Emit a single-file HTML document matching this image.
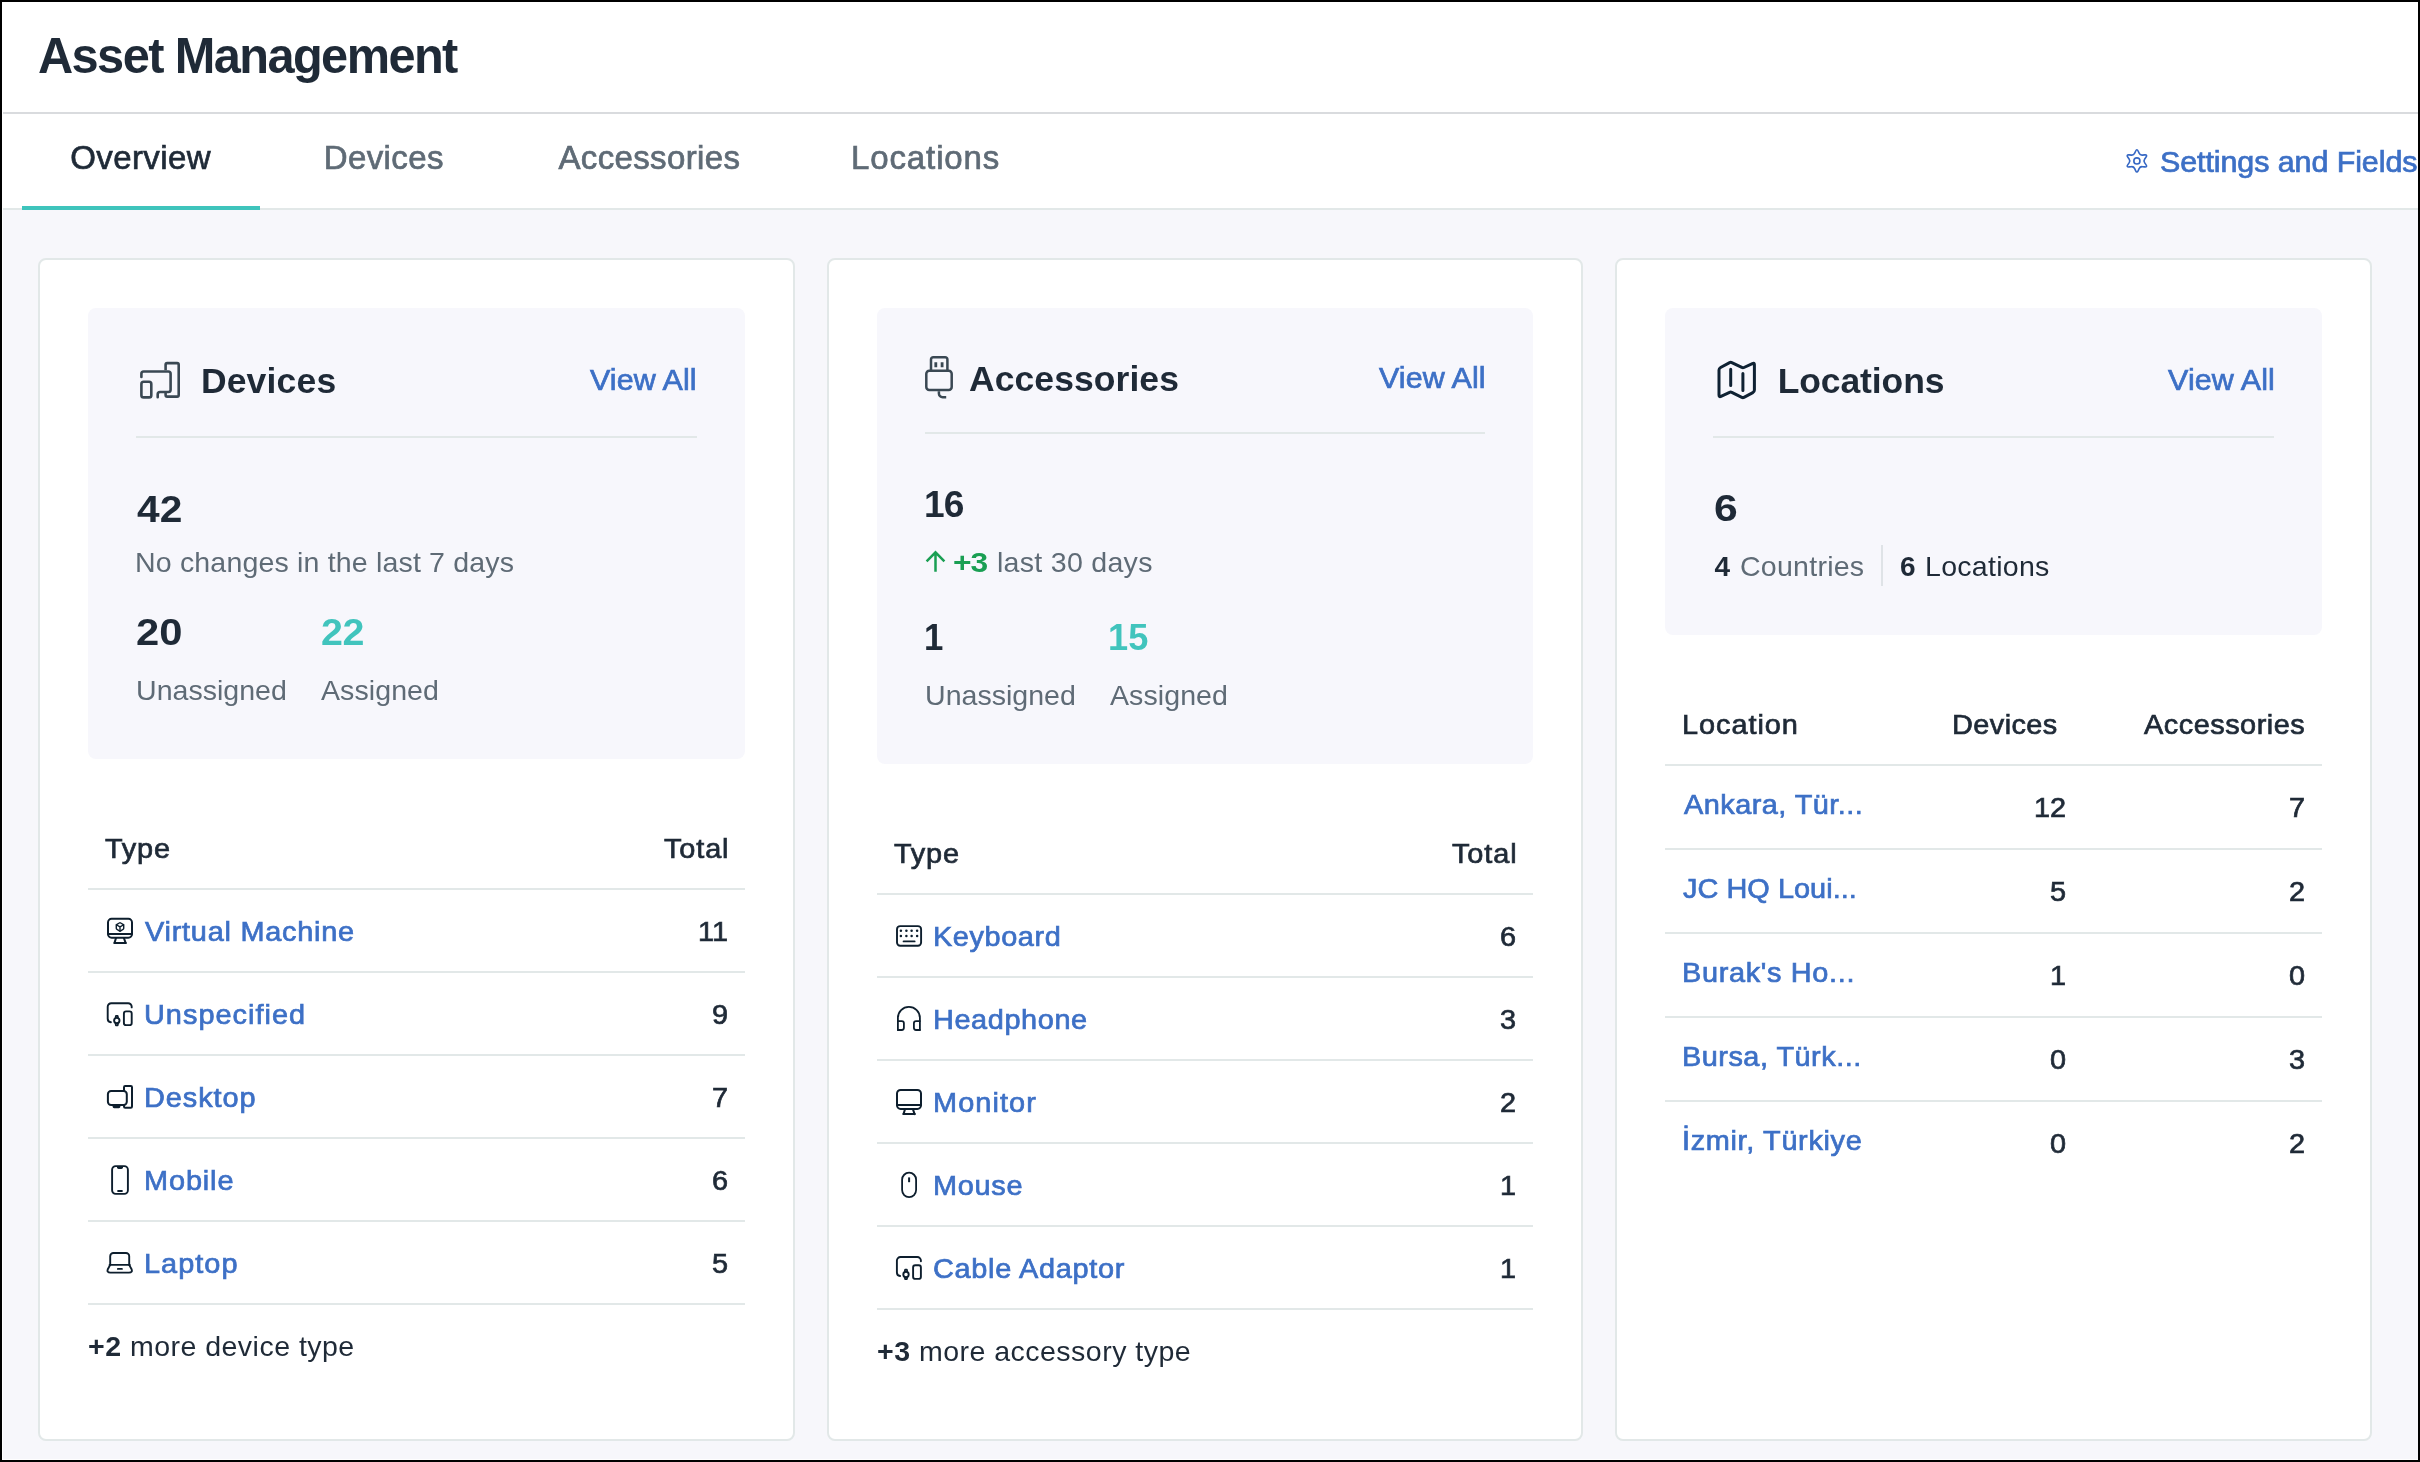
<!DOCTYPE html>
<html lang="en"><head><meta charset="utf-8"><title>Asset Management</title>
<style>
*{box-sizing:border-box;margin:0;padding:0}
html,body{width:2420px;height:1462px;overflow:hidden;background:#f7f7fb}
body{font-family:"Liberation Sans",sans-serif;position:relative}
.abs,.t,.card,.panel,.ln{position:absolute}
.t{white-space:pre;transform-origin:0 0}
.hdr{left:0;top:0;width:2420px;height:208px;background:#fff}
.card{background:#fff;border:2px solid #e2e8e8;border-radius:8px;top:258px;height:1183px}
.panel{background:#f7f7fc;border-radius:8px}
.ln{height:2px;background:#e2e8e8}
.frame{position:absolute;left:0;top:0;width:2420px;height:1462px;border:2px solid #000;z-index:10}
svg.ov{position:absolute;left:0;top:0;z-index:3}
.txt{position:absolute;left:0;top:0;width:2420px;height:1462px;z-index:4;will-change:transform}
.t{z-index:4}
</style></head>
<body>
<div class="abs hdr"></div>
<div class="ln" style="left:0;top:112px;width:2420px;background:#d9dbde"></div>
<div class="ln" style="left:0;top:208px;width:2420px;background:#e2e8e8"></div>
<div class="abs" style="left:22px;top:206px;width:238px;height:4px;background:#3ec4bc"></div>
<div class="abs" style="left:2px;top:2px;width:1px;height:1458px;background:#fff"></div>
<div class="abs" style="left:2px;top:1459px;width:2416px;height:1px;background:#fff"></div>
<div class="card" style="left:38px;width:757px"></div>
<div class="card" style="left:827px;width:756px"></div>
<div class="card" style="left:1615px;width:757px"></div>
<div class="panel" style="left:88px;top:308px;width:657px;height:451px"></div>
<div class="panel" style="left:877px;top:308px;width:656px;height:456px"></div>
<div class="panel" style="left:1665px;top:308px;width:657px;height:327px"></div>
<div class="ln" style="left:136px;top:436px;width:561px"></div>
<div class="ln" style="left:925px;top:432px;width:560px"></div>
<div class="ln" style="left:1713px;top:436px;width:561px"></div>
<div class="abs" style="left:1881px;top:545px;width:2px;height:41px;background:#dfe3e7"></div>
<div class="ln" style="left:88px;top:888px;width:657px"></div>
<div class="ln" style="left:877px;top:893px;width:656px"></div>
<div class="ln" style="left:88px;top:971px;width:657px"></div>
<div class="ln" style="left:877px;top:976px;width:656px"></div>
<div class="ln" style="left:88px;top:1054px;width:657px"></div>
<div class="ln" style="left:877px;top:1059px;width:656px"></div>
<div class="ln" style="left:88px;top:1137px;width:657px"></div>
<div class="ln" style="left:877px;top:1142px;width:656px"></div>
<div class="ln" style="left:88px;top:1220px;width:657px"></div>
<div class="ln" style="left:877px;top:1225px;width:656px"></div>
<div class="ln" style="left:88px;top:1303px;width:657px"></div>
<div class="ln" style="left:877px;top:1308px;width:656px"></div>
<div class="ln" style="left:1665px;top:764px;width:657px"></div>
<div class="ln" style="left:1665px;top:848px;width:657px"></div>
<div class="ln" style="left:1665px;top:932px;width:657px"></div>
<div class="ln" style="left:1665px;top:1016px;width:657px"></div>
<div class="ln" style="left:1665px;top:1100px;width:657px"></div>
<svg class="ov" width="2420" height="1462" viewBox="0 0 2420 1462"><g fill="none" stroke="#3567c4" stroke-width="1.6" stroke-linejoin="round"><path d="M2135.58 151.21Q2136.90 148.30 2138.22 151.21L2139.11 153.17Q2140.10 155.36 2142.49 155.12L2144.63 154.91Q2147.81 154.60 2145.95 157.20L2144.70 158.95Q2143.30 160.90 2144.70 162.85L2145.95 164.60Q2147.81 167.20 2144.63 166.89L2142.49 166.68Q2140.10 166.44 2139.11 168.63L2138.22 170.59Q2136.90 173.50 2135.58 170.59L2134.69 168.63Q2133.70 166.44 2131.31 166.68L2129.17 166.89Q2125.99 167.20 2127.85 164.60L2129.10 162.85Q2130.50 160.90 2129.10 158.95L2127.85 157.20Q2125.99 154.60 2129.17 154.91L2131.31 155.12Q2133.70 155.36 2134.69 153.17Z"/><circle cx="2136.9" cy="160.9" r="3.05"/></g><g fill="none" stroke="#3a4853" stroke-width="2.6" stroke-linecap="round" stroke-linejoin="round"><rect x="165.60" y="363.10" width="13.10" height="33.50" rx="1.6" /><rect x="140" y="370.2" width="30.6" height="21.8" fill="#f7f7fc" stroke="none"/><path d="M141.4 377V373.8a2.3 2.3 0 0 1 2.3-2.3H168.3a2.3 2.3 0 0 1 2.3 2.3V389.7a2.3 2.3 0 0 1-2.3 2.3H160a2.3 2.3 0 0 0-2.3 2.3V397.3"/><rect x="141.40" y="381.70" width="9.90" height="15.70" rx="2.2" fill="#f7f7fc"/></g><g fill="none" stroke="#3a4853" stroke-width="2.5" stroke-linecap="round" stroke-linejoin="round"><path d="M931 370.6V359.4a2.2 2.2 0 0 1 2.2-2.2H945.2a2.2 2.2 0 0 1 2.2 2.2V370.6"/><rect x="926.30" y="370.70" width="25.40" height="19.40" rx="3" /><path d="M938.9 391.2V393.6a3.7 3.7 0 0 0 3.7 3.7H946.2" stroke-linecap="butt"/><path d="M935.8 362.2V367.2M942.1 362.2V367.2" stroke-width="2.8" stroke-linecap="butt"/></g><g fill="none" stroke="#0f2233" stroke-width="3.0" stroke-linecap="round" stroke-linejoin="round"><path d="M1719.00 370.10Q1719.00 368.30 1720.58 367.45L1729.64 362.57Q1730.70 362.00 1731.78 362.53L1741.82 367.47Q1742.90 368.00 1743.99 367.49L1752.41 363.54Q1754.40 362.60 1754.40 364.80L1754.40 390.00Q1754.40 391.80 1752.81 392.64L1743.96 397.34Q1742.90 397.90 1741.83 397.36L1731.77 392.34Q1730.70 391.80 1729.61 392.31L1720.99 396.36Q1719.00 397.30 1719.00 395.10Z"/><path d="M1730.7 369.2V385.6M1742.9 373.4V390.4"/></g><path d="M935.5 571.8V552.6M926.6 561.4L935.5 552.4L944.4 561.4" fill="none" stroke="#1a9f53" stroke-width="2.5" stroke-linecap="butt" stroke-linejoin="miter"/><g transform="translate(107.00 917.80)" fill="none" stroke="#0d1e2d" stroke-width="2.0" stroke-linecap="round" stroke-linejoin="round"><rect x="1.00" y="1.00" width="24.00" height="18.90" rx="3.6" /><path d="M1.2 16.1H24.8"/><path d="M9.0 20.2L7.5 25.1M16.9 20.2L18.6 25.1M7.2 25.1H19.0"/><path d="M12.31 5.20Q13.00 4.80 13.69 5.20L16.03 6.55Q16.72 6.95 16.72 7.75L16.72 10.45Q16.72 11.25 16.03 11.65L13.69 13.00Q13.00 13.40 12.31 13.00L9.97 11.65Q9.28 11.25 9.28 10.45L9.28 7.75Q9.28 6.95 9.97 6.55Z" stroke-width="1.4"/><path d="M13 9.1V13.399999999999999M13 9.1L16.72 6.95M13 9.1L9.28 6.95" stroke-width="1.4"/></g><g transform="translate(106.70 1002.20)" fill="none" stroke="#0d1e2d" stroke-width="1.9" stroke-linecap="round" stroke-linejoin="round"><path d="M25 5.2V4.6A3.6 3.6 0 0 0 21.4 1H4.6A3.6 3.6 0 0 0 1 4.6V16.4A3.6 3.6 0 0 0 4.2 20"/><rect x="17.20" y="9.20" width="7.80" height="13.70" rx="2.2" /><circle cx="10.1" cy="18.4" r="2.7"/><path d="M8.9 15.2L9.2 13.6H11L11.3 15.2M8.9 21.6L9.2 23.2H11L11.3 21.6" stroke-width="1.7"/></g><g transform="translate(106.60 1085.00)" fill="none" stroke="#0d1e2d" stroke-width="2.0" stroke-linecap="round" stroke-linejoin="round"><rect x="17.40" y="1.00" width="8.00" height="21.80" rx="1.2" /><rect x="1.30" y="6.10" width="18.90" height="13.80" rx="3.2" fill="#fff"/><path d="M7.6 21.6H12.2" stroke-width="3.2" stroke-linecap="round"/></g><g transform="translate(111.10 1165.10)" fill="none" stroke="#0d1e2d" stroke-width="1.9" stroke-linecap="round" stroke-linejoin="round"><rect x="1.00" y="1.00" width="15.80" height="27.80" rx="3.6" /><path d="M5.9 1.5V2.2Q5.9 3.8 7.5 3.8H10.3Q11.9 3.8 11.9 2.2V1.5Z" fill="#0d1e2d" stroke="none"/><path d="M7.0 25.9H10.8" stroke-width="1.9"/></g><g transform="translate(106.40 1252.00)" fill="none" stroke="#0d1e2d" stroke-width="1.9" stroke-linecap="round" stroke-linejoin="round"><path d="M3.8 12.9V4.2A3.2 3.2 0 0 1 7 1H19.6A3.2 3.2 0 0 1 22.8 4.2V12.9"/><path d="M3.2 12.9H23.4"/><path d="M3.8 12.9L1.4 17.2Q0.2 20.6 4.0 20.6H22.6Q26.4 20.6 25.2 17.2L22.8 12.9"/><path d="M11.4 16.9H15.6" stroke-width="1.7"/></g><g transform="translate(896.00 925.10)" fill="none" stroke="#0d1e2d" stroke-width="1.9" stroke-linecap="round" stroke-linejoin="round"><rect x="1.00" y="1.00" width="24.10" height="19.60" rx="3.2" /><circle cx="4.9" cy="5.6" r="1.25" fill="#0d1e2d" stroke="none"/><circle cx="10.4" cy="5.6" r="1.25" fill="#0d1e2d" stroke="none"/><circle cx="15.6" cy="5.6" r="1.25" fill="#0d1e2d" stroke="none"/><circle cx="21.1" cy="5.6" r="1.25" fill="#0d1e2d" stroke="none"/><circle cx="4.9" cy="10.9" r="1.25" fill="#0d1e2d" stroke="none"/><circle cx="10.4" cy="10.9" r="1.25" fill="#0d1e2d" stroke="none"/><circle cx="15.6" cy="10.9" r="1.25" fill="#0d1e2d" stroke="none"/><circle cx="21.1" cy="10.9" r="1.25" fill="#0d1e2d" stroke="none"/><path d="M7.6 16.3H18.6"/></g><g transform="translate(896.90 1005.90)" fill="none" stroke="#0d1e2d" stroke-width="1.8" stroke-linecap="round" stroke-linejoin="round"><path d="M1 24.1V12A11 11 0 0 1 23 12V24.1"/><path d="M1 15.2H4.8A2.2 2.2 0 0 1 7 17.4V21.9A2.2 2.2 0 0 1 4.8 24.1H1"/><path d="M23 15.2H19.2A2.2 2.2 0 0 0 17 17.4V21.9A2.2 2.2 0 0 0 19.2 24.1H23"/></g><g transform="translate(896.00 1089.00)" fill="none" stroke="#0d1e2d" stroke-width="2.0" stroke-linecap="round" stroke-linejoin="round"><rect x="1.00" y="1.00" width="24.00" height="18.90" rx="3.6" /><path d="M1.2 16.1H24.8"/><path d="M9.0 20.2L7.5 25.1M16.9 20.2L18.6 25.1M7.2 25.1H19.0"/></g><g transform="translate(901.20 1171.80)" fill="none" stroke="#0d1e2d" stroke-width="1.8" stroke-linecap="round" stroke-linejoin="round"><rect x="0.90" y="0.90" width="14.00" height="24.40" rx="7" /><path d="M7.9 5.6V10.4" stroke-width="2" stroke-linecap="butt"/></g><g transform="translate(895.90 1256.00)" fill="none" stroke="#0d1e2d" stroke-width="1.9" stroke-linecap="round" stroke-linejoin="round"><path d="M25 5.2V4.6A3.6 3.6 0 0 0 21.4 1H4.6A3.6 3.6 0 0 0 1 4.6V16.4A3.6 3.6 0 0 0 4.2 20"/><rect x="17.20" y="9.20" width="7.80" height="13.70" rx="2.2" /><circle cx="10.1" cy="18.4" r="2.7"/><path d="M8.9 15.2L9.2 13.6H11L11.3 15.2M8.9 21.6L9.2 23.2H11L11.3 21.6" stroke-width="1.7"/></g></svg>
<div class="txt">
<span class="t" style="left:38.0px;top:31px;font-size:50px;line-height:50px;color:#1f2a37;font-weight:700;letter-spacing:-1.64px;transform:scaleX(0.975);">Asset Management</span>
<span class="t" style="left:70.3px;top:141px;font-size:33px;line-height:33px;color:#1f2a37;letter-spacing:0.39px;-webkit-text-stroke:0.7px #1f2a37;">Overview</span>
<span class="t" style="left:323.8px;top:141px;font-size:33px;line-height:33px;color:#5f6b76;letter-spacing:0.38px;-webkit-text-stroke:0.7px #5f6b76;">Devices</span>
<span class="t" style="left:558.5px;top:141px;font-size:33px;line-height:33px;color:#5f6b76;letter-spacing:0.35px;-webkit-text-stroke:0.7px #5f6b76;">Accessories</span>
<span class="t" style="left:851.0px;top:141px;font-size:33px;line-height:33px;color:#5f6b76;letter-spacing:0.88px;-webkit-text-stroke:0.7px #5f6b76;">Locations</span>
<span class="t" style="left:2160.0px;top:148px;font-size:29px;line-height:29px;color:#3d70c6;letter-spacing:-0.08px;-webkit-text-stroke:0.7px #3d70c6;transform:scaleX(1.05);">Settings and Fields</span>
<span class="t" style="left:200.9px;top:364px;font-size:35.5px;line-height:35.5px;color:#1f2a37;font-weight:700;letter-spacing:0.17px;">Devices</span>
<span class="t" style="left:590.0px;top:366px;font-size:29px;line-height:29px;color:#3d70c6;letter-spacing:0.07px;-webkit-text-stroke:0.7px #3d70c6;transform:scaleX(1.05);">View All</span>
<span class="t" style="left:137.3px;top:491px;font-size:37px;line-height:37px;color:#1f2a37;font-weight:700;transform:scaleX(1.1);">42</span>
<span class="t" style="left:135.3px;top:549px;font-size:28px;line-height:28px;color:#5f6b76;letter-spacing:0.15px;transform:scaleX(1.02);">No changes in the last 7 days</span>
<span class="t" style="left:136.3px;top:614px;font-size:37px;line-height:37px;color:#1f2a37;font-weight:700;transform:scaleX(1.128);">20</span>
<span class="t" style="left:320.8px;top:614px;font-size:37px;line-height:37px;color:#41c4bd;font-weight:700;letter-spacing:-0.47px;transform:scaleX(1.064);">22</span>
<span class="t" style="left:136.3px;top:677px;font-size:28px;line-height:28px;color:#5f6b76;transform:scaleX(1.02);">Unassigned</span>
<span class="t" style="left:320.9px;top:677px;font-size:28px;line-height:28px;color:#5f6b76;letter-spacing:0.06px;transform:scaleX(1.02);">Assigned</span>
<span class="t" style="left:105.4px;top:835px;font-size:27.5px;line-height:27.5px;color:#1f2a37;letter-spacing:0.76px;-webkit-text-stroke:0.7px #1f2a37;transform:scaleX(1.05);">Type</span>
<span class="t" style="left:664.0px;top:835px;font-size:27.5px;line-height:27.5px;color:#1f2a37;letter-spacing:0.83px;-webkit-text-stroke:0.7px #1f2a37;transform:scaleX(1.05);">Total</span>
<span class="t" style="left:145.3px;top:918px;font-size:27.5px;line-height:27.5px;color:#3d70c6;letter-spacing:0.72px;-webkit-text-stroke:0.7px #3d70c6;transform:scaleX(1.05);">Virtual Machine</span>
<span class="t" style="left:697.5px;top:918px;font-size:27.5px;line-height:27.5px;color:#1f2a37;-webkit-text-stroke:0.7px #1f2a37;transform:scaleX(1.05);">11</span>
<span class="t" style="left:144.3px;top:1001px;font-size:27.5px;line-height:27.5px;color:#3d70c6;letter-spacing:0.97px;-webkit-text-stroke:0.7px #3d70c6;transform:scaleX(1.05);">Unspecified</span>
<span class="t" style="left:711.5px;top:1001px;font-size:27.5px;line-height:27.5px;color:#1f2a37;-webkit-text-stroke:0.7px #1f2a37;transform:scaleX(1.05);">9</span>
<span class="t" style="left:144.3px;top:1084px;font-size:27.5px;line-height:27.5px;color:#3d70c6;letter-spacing:0.89px;-webkit-text-stroke:0.7px #3d70c6;transform:scaleX(1.05);">Desktop</span>
<span class="t" style="left:711.5px;top:1084px;font-size:27.5px;line-height:27.5px;color:#1f2a37;-webkit-text-stroke:0.7px #1f2a37;transform:scaleX(1.05);">7</span>
<span class="t" style="left:144.3px;top:1167px;font-size:27.5px;line-height:27.5px;color:#3d70c6;letter-spacing:0.84px;-webkit-text-stroke:0.7px #3d70c6;transform:scaleX(1.05);">Mobile</span>
<span class="t" style="left:711.5px;top:1167px;font-size:27.5px;line-height:27.5px;color:#1f2a37;-webkit-text-stroke:0.7px #1f2a37;transform:scaleX(1.05);">6</span>
<span class="t" style="left:144.3px;top:1250px;font-size:27.5px;line-height:27.5px;color:#3d70c6;letter-spacing:0.99px;-webkit-text-stroke:0.7px #3d70c6;transform:scaleX(1.05);">Laptop</span>
<span class="t" style="left:711.5px;top:1250px;font-size:27.5px;line-height:27.5px;color:#1f2a37;-webkit-text-stroke:0.7px #1f2a37;transform:scaleX(1.05);">5</span>
<span class="t" style="left:88.1px;top:1333px;font-size:28px;line-height:28px;color:#1f2a37;letter-spacing:0.45px;transform:scaleX(1.02);"><b>+2</b> more device type</span>
<span class="t" style="left:969.0px;top:362px;font-size:35.5px;line-height:35.5px;color:#1f2a37;font-weight:700;letter-spacing:0.07px;">Accessories</span>
<span class="t" style="left:1379.0px;top:364px;font-size:29px;line-height:29px;color:#3d70c6;letter-spacing:0.07px;-webkit-text-stroke:0.7px #3d70c6;transform:scaleX(1.05);">View All</span>
<span class="t" style="left:924.4px;top:486px;font-size:37px;line-height:37px;color:#1f2a37;font-weight:700;letter-spacing:-0.90px;transform:scaleX(1.003);">16</span>
<span class="t" style="left:953.2px;top:549px;font-size:28px;line-height:28px;color:#1a9f53;font-weight:700;letter-spacing:-0.88px;transform:scaleX(1.133);">+3</span>
<span class="t" style="left:996.8px;top:549px;font-size:28px;line-height:28px;color:#5f6b76;letter-spacing:0.27px;transform:scaleX(1.02);">last 30 days</span>
<span class="t" style="left:924.4px;top:619px;font-size:37px;line-height:37px;color:#1f2a37;font-weight:700;transform:scaleX(0.94);">1</span>
<span class="t" style="left:1108.0px;top:619px;font-size:37px;line-height:37px;color:#41c4bd;font-weight:700;letter-spacing:0.20px;transform:scaleX(0.979);">15</span>
<span class="t" style="left:925.4px;top:682px;font-size:28px;line-height:28px;color:#5f6b76;transform:scaleX(1.02);">Unassigned</span>
<span class="t" style="left:1110.0px;top:682px;font-size:28px;line-height:28px;color:#5f6b76;letter-spacing:0.06px;transform:scaleX(1.02);">Assigned</span>
<span class="t" style="left:894.4px;top:840px;font-size:27.5px;line-height:27.5px;color:#1f2a37;letter-spacing:0.76px;-webkit-text-stroke:0.7px #1f2a37;transform:scaleX(1.05);">Type</span>
<span class="t" style="left:1452.4px;top:840px;font-size:27.5px;line-height:27.5px;color:#1f2a37;letter-spacing:0.86px;-webkit-text-stroke:0.7px #1f2a37;transform:scaleX(1.05);">Total</span>
<span class="t" style="left:933.2px;top:923px;font-size:27.5px;line-height:27.5px;color:#3d70c6;letter-spacing:0.56px;-webkit-text-stroke:0.7px #3d70c6;transform:scaleX(1.05);">Keyboard</span>
<span class="t" style="left:1500.0px;top:923px;font-size:27.5px;line-height:27.5px;color:#1f2a37;-webkit-text-stroke:0.7px #1f2a37;transform:scaleX(1.05);">6</span>
<span class="t" style="left:933.2px;top:1006px;font-size:27.5px;line-height:27.5px;color:#3d70c6;letter-spacing:0.57px;-webkit-text-stroke:0.7px #3d70c6;transform:scaleX(1.05);">Headphone</span>
<span class="t" style="left:1500.0px;top:1006px;font-size:27.5px;line-height:27.5px;color:#1f2a37;-webkit-text-stroke:0.7px #1f2a37;transform:scaleX(1.05);">3</span>
<span class="t" style="left:933.2px;top:1089px;font-size:27.5px;line-height:27.5px;color:#3d70c6;letter-spacing:1.05px;-webkit-text-stroke:0.7px #3d70c6;transform:scaleX(1.05);">Monitor</span>
<span class="t" style="left:1500.0px;top:1089px;font-size:27.5px;line-height:27.5px;color:#1f2a37;-webkit-text-stroke:0.7px #1f2a37;transform:scaleX(1.05);">2</span>
<span class="t" style="left:933.2px;top:1172px;font-size:27.5px;line-height:27.5px;color:#3d70c6;letter-spacing:0.67px;-webkit-text-stroke:0.7px #3d70c6;transform:scaleX(1.05);">Mouse</span>
<span class="t" style="left:1500.0px;top:1172px;font-size:27.5px;line-height:27.5px;color:#1f2a37;-webkit-text-stroke:0.7px #1f2a37;transform:scaleX(1.05);">1</span>
<span class="t" style="left:933.2px;top:1255px;font-size:27.5px;line-height:27.5px;color:#3d70c6;letter-spacing:0.67px;-webkit-text-stroke:0.7px #3d70c6;transform:scaleX(1.05);">Cable Adaptor</span>
<span class="t" style="left:1500.0px;top:1255px;font-size:27.5px;line-height:27.5px;color:#1f2a37;-webkit-text-stroke:0.7px #1f2a37;transform:scaleX(1.05);">1</span>
<span class="t" style="left:876.9px;top:1338px;font-size:28px;line-height:28px;color:#1f2a37;letter-spacing:0.45px;transform:scaleX(1.02);"><b>+3</b> more accessory type</span>
<span class="t" style="left:1777.7px;top:364px;font-size:35.5px;line-height:35.5px;color:#1f2a37;font-weight:700;letter-spacing:-0.11px;">Locations</span>
<span class="t" style="left:2168.0px;top:366px;font-size:29px;line-height:29px;color:#3d70c6;letter-spacing:0.11px;-webkit-text-stroke:0.7px #3d70c6;transform:scaleX(1.05);">View All</span>
<span class="t" style="left:1713.5px;top:490px;font-size:37px;line-height:37px;color:#1f2a37;font-weight:700;transform:scaleX(1.153);">6</span>
<span class="t" style="left:1714.5px;top:553px;font-size:28px;line-height:28px;color:#1f2a37;font-weight:700;">4</span>
<span class="t" style="left:1740.3px;top:553px;font-size:28px;line-height:28px;color:#5f6b76;letter-spacing:0.23px;transform:scaleX(1.02);">Countries</span>
<span class="t" style="left:1900.0px;top:553px;font-size:28px;line-height:28px;color:#1f2a37;font-weight:700;">6</span>
<span class="t" style="left:1924.9px;top:553px;font-size:28px;line-height:28px;color:#1f2a37;letter-spacing:0.26px;transform:scaleX(1.02);">Locations</span>
<span class="t" style="left:1681.6px;top:711px;font-size:27.5px;line-height:27.5px;color:#1f2a37;letter-spacing:0.91px;-webkit-text-stroke:0.7px #1f2a37;transform:scaleX(1.05);">Location</span>
<span class="t" style="left:1951.6px;top:711px;font-size:27.5px;line-height:27.5px;color:#1f2a37;letter-spacing:0.41px;-webkit-text-stroke:0.7px #1f2a37;transform:scaleX(1.05);">Devices</span>
<span class="t" style="left:2144.2px;top:711px;font-size:27.5px;line-height:27.5px;color:#1f2a37;letter-spacing:0.48px;-webkit-text-stroke:0.7px #1f2a37;transform:scaleX(1.05);">Accessories</span>
<span class="t" style="left:1683.6px;top:791px;font-size:27.5px;line-height:27.5px;color:#3d70c6;letter-spacing:0.44px;-webkit-text-stroke:0.7px #3d70c6;transform:scaleX(1.05);">Ankara, Tür...</span>
<span class="t" style="left:2033.7px;top:794px;font-size:27.5px;line-height:27.5px;color:#1f2a37;-webkit-text-stroke:0.7px #1f2a37;transform:scaleX(1.05);">12</span>
<span class="t" style="left:2289.2px;top:794px;font-size:27.5px;line-height:27.5px;color:#1f2a37;-webkit-text-stroke:0.7px #1f2a37;transform:scaleX(1.05);">7</span>
<span class="t" style="left:1682.6px;top:875px;font-size:27.5px;line-height:27.5px;color:#3d70c6;letter-spacing:0.04px;-webkit-text-stroke:0.7px #3d70c6;transform:scaleX(1.05);">JC HQ Loui...</span>
<span class="t" style="left:2049.7px;top:878px;font-size:27.5px;line-height:27.5px;color:#1f2a37;-webkit-text-stroke:0.7px #1f2a37;transform:scaleX(1.05);">5</span>
<span class="t" style="left:2289.2px;top:878px;font-size:27.5px;line-height:27.5px;color:#1f2a37;-webkit-text-stroke:0.7px #1f2a37;transform:scaleX(1.05);">2</span>
<span class="t" style="left:1681.6px;top:959px;font-size:27.5px;line-height:27.5px;color:#3d70c6;letter-spacing:0.64px;-webkit-text-stroke:0.7px #3d70c6;transform:scaleX(1.05);">Burak's Ho...</span>
<span class="t" style="left:2049.7px;top:962px;font-size:27.5px;line-height:27.5px;color:#1f2a37;-webkit-text-stroke:0.7px #1f2a37;transform:scaleX(1.05);">1</span>
<span class="t" style="left:2289.2px;top:962px;font-size:27.5px;line-height:27.5px;color:#1f2a37;-webkit-text-stroke:0.7px #1f2a37;transform:scaleX(1.05);">0</span>
<span class="t" style="left:1681.6px;top:1043px;font-size:27.5px;line-height:27.5px;color:#3d70c6;letter-spacing:0.47px;-webkit-text-stroke:0.7px #3d70c6;transform:scaleX(1.05);">Bursa, Türk...</span>
<span class="t" style="left:2049.7px;top:1046px;font-size:27.5px;line-height:27.5px;color:#1f2a37;-webkit-text-stroke:0.7px #1f2a37;transform:scaleX(1.05);">0</span>
<span class="t" style="left:2289.2px;top:1046px;font-size:27.5px;line-height:27.5px;color:#1f2a37;-webkit-text-stroke:0.7px #1f2a37;transform:scaleX(1.05);">3</span>
<span class="t" style="left:1681.6px;top:1127px;font-size:27.5px;line-height:27.5px;color:#3d70c6;letter-spacing:0.63px;-webkit-text-stroke:0.7px #3d70c6;transform:scaleX(1.05);">İzmir, Türkiye</span>
<span class="t" style="left:2049.7px;top:1130px;font-size:27.5px;line-height:27.5px;color:#1f2a37;-webkit-text-stroke:0.7px #1f2a37;transform:scaleX(1.05);">0</span>
<span class="t" style="left:2289.2px;top:1130px;font-size:27.5px;line-height:27.5px;color:#1f2a37;-webkit-text-stroke:0.7px #1f2a37;transform:scaleX(1.05);">2</span>
</div>
<div class="frame"></div>
</body></html>
